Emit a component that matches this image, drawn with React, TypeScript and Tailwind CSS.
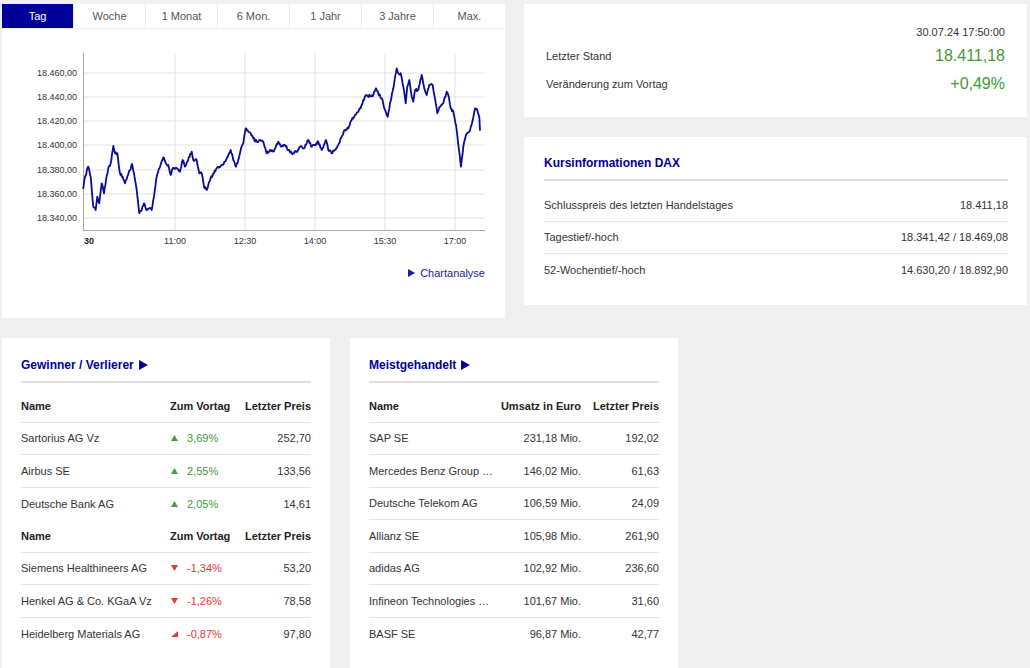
import React from "react";

const pts: [number, number][] = [
  [83.3, 188.3], [85, 176.7], [88.3, 166.7], [90.7, 176.7], [93.3, 206.7], [95.7, 210], [97.3, 196.7],
  [99.3, 203.3], [101.7, 183.3], [104, 193.3], [106, 180], [108.3, 168.3], [110.7, 163.3], [113.3, 146],
  [115, 153.3], [117.3, 153.3], [120, 173.3], [122.7, 176.7], [125, 183.3], [127.3, 176.7], [130, 170],
  [132, 164], [134, 173.3], [136.7, 190], [139.3, 213.3], [141.7, 210], [144, 203.3], [146.7, 210],
  [149.3, 208.3], [151.7, 210], [154, 196.7], [156.7, 176.7], [159.3, 168.3], [163.3, 157.3], [166, 163.3],
  [168.3, 165], [170.7, 175], [172.7, 168.3], [176.7, 168.3], [180, 171.7], [182.7, 160], [185, 166.7],
  [187.3, 161.7], [191.7, 151.7], [193.3, 160], [196.7, 160], [199.3, 173.3], [201.7, 173.3], [204, 186.7],
  [206.7, 190], [209.3, 181.7], [213.3, 173.3], [216.7, 168.3], [221.7, 165], [225, 161.7], [228.3, 155],
  [230.7, 150], [233.3, 160], [236, 166.7], [238.3, 160], [240.7, 150], [243.3, 143.3], [245.7, 128.3],
  [248.3, 131.7], [250.7, 133.3], [253.3, 138.3], [256.7, 141.7], [260, 140], [263.3, 141.7], [266.7, 153.3],
  [270, 150], [273.3, 151.7], [278.3, 141.7], [281.7, 146.7], [285, 145], [288.3, 150], [291.7, 153.3],
  [296.7, 151.7], [300, 146.7], [304, 148.3], [308.3, 140], [311.7, 146.7], [315, 145], [318.3, 141.7],
  [321.7, 150], [326, 140], [328.3, 150], [331.7, 153.3], [335, 150], [338.3, 145], [341.7, 136.7],
  [345, 130], [348.3, 128.3], [351.7, 120], [355, 115], [358.3, 111.7], [360.7, 108.3], [363.3, 100],
  [366, 95], [370, 96], [373.3, 95], [376, 88.3], [378.3, 93.3], [381.7, 98.3], [385, 110], [387.7, 116.7],
  [390, 103.3], [393.3, 88.3], [396.7, 68.3], [398.3, 73.3], [400.7, 73.3], [403.3, 86.7], [405.7, 103.3],
  [407.3, 86.7], [409.3, 80], [411.7, 96.7], [413.3, 101.7], [415, 90], [418.3, 90], [421.7, 75],
  [424, 86.7], [426.7, 95], [429.3, 85], [432.7, 85], [435, 98.3], [437.3, 113.3], [440, 106.7],
  [443.3, 103.3], [446.7, 91.7], [448.3, 95], [450.7, 108.3], [453.3, 111.7], [456.7, 130], [459, 150],
  [461, 166.7], [463.3, 146.7], [466, 135], [469.3, 131.7], [472.7, 120], [475, 108.3], [477.3, 110],
  [479.3, 116.7], [480, 130],
];

function buildPath(): string {
  let seed = 12345;
  const rnd = () => {
    seed = (seed * 16807) % 2147483647;
    return seed / 2147483647;
  };
  const out: string[] = [];
  for (let i = 0; i < pts.length - 1; i++) {
    const [x0, y0] = pts[i];
    const [x1, y1] = pts[i + 1];
    const steps = Math.max(1, Math.round((x1 - x0) / 0.7));
    for (let s = 0; s < steps; s++) {
      const t = s / steps;
      const x = x0 + (x1 - x0) * t;
      let y = y0 + (y1 - y0) * t;
      if (s > 0) y += (rnd() - 0.5) * 2.6;
      out.push(`${x.toFixed(2)},${y.toFixed(2)}`);
    }
  }
  const last = pts[pts.length - 1];
  out.push(`${last[0]},${last[1]}`);
  return "M" + out.join("L");
}

const linePath = buildPath();

const yLabels: [string, number][] = [
  ["18.460,00", 73],
  ["18.440,00", 97],
  ["18.420,00", 121],
  ["18.400,00", 145],
  ["18.380,00", 170],
  ["18.360,00", 194],
  ["18.340,00", 218],
];

const xLabels: [string, number][] = [
  ["11:00", 175],
  ["12:30", 245],
  ["14:00", 315],
  ["15:30", 385],
  ["17:00", 455],
];

function Chart() {
  return (
    <svg width={503} height={232} viewBox="2 29 503 232" className="block">
      {yLabels.map(([l, y]) => (
        <line key={"h" + l} x1={83} x2={485} y1={y} y2={y} stroke="#e2e2e2" strokeWidth={1} />
      ))}
      {xLabels.map(([l, x]) => (
        <line key={"v" + l} x1={x} x2={x} y1={53} y2={231} stroke="#e2e2e2" strokeWidth={1} />
      ))}
      <line x1={83.5} x2={83.5} y1={53} y2={231} stroke="#a8a8a8" strokeWidth={1} />
      <line x1={83} x2={485} y1={230.5} y2={230.5} stroke="#a8a8a8" strokeWidth={1} />
      {yLabels.map(([l, y]) => (
        <text key={"t" + l} x={77} y={y + 3.2} textAnchor="end" fontSize={9} fill="#333">
          {l}
        </text>
      ))}
      <text x={84} y={244} fontSize={9} fontWeight="bold" fill="#222">
        30
      </text>
      {xLabels.map(([l, x]) => (
        <text key={"x" + l} x={x} y={244} textAnchor="middle" fontSize={9} fill="#333">
          {l}
        </text>
      ))}
      <path d={linePath} fill="none" stroke="#0b0b96" strokeWidth={1.8} strokeLinejoin="round" strokeLinecap="round" />
    </svg>
  );
}

const tabs = ["Tag", "Woche", "1 Monat", "6 Mon.", "1 Jahr", "3 Jahre", "Max."];

function Play({ size = 8, color = "#00009a", className = "" }: { size?: number; color?: string; className?: string }) {
  return (
    <svg width={size} height={size + 1} viewBox="0 0 8 9" className={"inline-block shrink-0 " + className}>
      <polygon points="0,0 8,4.5 0,9" fill={color} />
    </svg>
  );
}

function UpTri() {
  return (
    <svg width={7} height={6} viewBox="0 0 7 6" className="mr-[9px] ml-[1px] shrink-0">
      <polygon points="3.5,0 7,6 0,6" fill="#43a047" />
    </svg>
  );
}
function DownTri() {
  return (
    <svg width={7} height={6} viewBox="0 0 7 6" className="mr-[9px] ml-[1px] shrink-0">
      <polygon points="0,0 7,0 3.5,6" fill="#e53935" />
    </svg>
  );
}
function CornerTri() {
  return (
    <svg width={7} height={6} viewBox="0 0 7 6" className="mr-[9px] ml-[1px] shrink-0">
      <polygon points="7,0 7,6 0,6" fill="#e53935" />
    </svg>
  );
}

type GV = { name: string; val: string; price: string; dir: "up" | "down" | "corner" };

const gainers: GV[] = [
  { name: "Sartorius AG Vz", val: "3,69%", price: "252,70", dir: "up" },
  { name: "Airbus SE", val: "2,55%", price: "133,56", dir: "up" },
  { name: "Deutsche Bank AG", val: "2,05%", price: "14,61", dir: "up" },
];
const losers: GV[] = [
  { name: "Siemens Healthineers AG", val: "-1,34%", price: "53,20", dir: "down" },
  { name: "Henkel AG & Co. KGaA Vz", val: "-1,26%", price: "78,58", dir: "down" },
  { name: "Heidelberg Materials AG", val: "-0,87%", price: "97,80", dir: "corner" },
];

const most: [string, string, string][] = [
  ["SAP SE", "231,18 Mio.", "192,02"],
  ["Mercedes Benz Group …", "146,02 Mio.", "61,63"],
  ["Deutsche Telekom AG", "106,59 Mio.", "24,09"],
  ["Allianz SE", "105,98 Mio.", "261,90"],
  ["adidas AG", "102,92 Mio.", "236,60"],
  ["Infineon Technologies …", "101,67 Mio.", "31,60"],
  ["BASF SE", "96,87 Mio.", "42,77"],
];

function GVHeader({ border }: { border: boolean }) {
  return (
    <div
      className={
        "grid grid-cols-[149px_70px_1fr] items-center h-[32.5px] text-[11px] font-bold text-[#222] " +
        (border ? "border-b border-[#e3e3e3]" : "")
      }
    >
      <div>Name</div>
      <div>Zum Vortag</div>
      <div className="text-right">Letzter Preis</div>
    </div>
  );
}

function GVRow({ r, border }: { r: GV; border: boolean }) {
  const up = r.dir === "up";
  return (
    <div
      className={
        "grid grid-cols-[149px_70px_1fr] items-center h-[32.5px] text-[11px] text-[#333] " +
        (border ? "border-b border-[#e3e3e3]" : "")
      }
    >
      <div className="whitespace-nowrap">{r.name}</div>
      <div className={"flex items-center " + (up ? "text-[#3f9a36]" : "text-[#e53935]")}>
        {r.dir === "up" ? <UpTri /> : r.dir === "down" ? <DownTri /> : <CornerTri />}
        <span>{r.val}</span>
      </div>
      <div className="text-right">{r.price}</div>
    </div>
  );
}

function PanelTitle({ children, arrow }: { children: React.ReactNode; arrow?: boolean }) {
  return (
    <div className="flex items-center text-[12px] leading-[16px] font-bold text-[#00009a] pb-[8px] border-b-2 border-[#dedede]">
      <span>{children}</span>
      {arrow && <Play size={9} className="ml-[5px]" />}
    </div>
  );
}

export default function App() {
  return (
    <div className="min-h-[668px] bg-[#f0f0f0] font-['Liberation_Sans',Arial,sans-serif] pl-[2px] pt-[4px] overflow-hidden">
      <div className="flex gap-[19px] items-start">
        {/* Chart panel */}
        <div className="w-[503px] flex flex-col gap-px bg-[#ececec]">
          <div className="flex gap-px h-[24px]">
            {tabs.map((t, i) => (
              <div
                key={t}
                className={
                  "flex-1 flex items-center justify-center text-[11px] " +
                  (i === 0 ? "bg-[#00009a] text-white" : "bg-white text-[#555]")
                }
              >
                {t}
              </div>
            ))}
          </div>
          <div className="bg-white h-[289px] flex flex-col">
            <Chart />
            <div className="flex justify-end items-center pr-[20px] pt-[5px] text-[11px] leading-[14px] text-[#1a1aa6]">
              <Play size={7} color="#1a1aa6" className="mr-[5px]" />
              <span>Chartanalyse</span>
            </div>
          </div>
        </div>

        {/* Right column */}
        <div className="w-[503px] flex flex-col gap-[20px]">
          <div className="bg-white h-[113px] pl-[22px] pr-[22px] pt-[21px] text-[11px] text-[#333]">
            <div className="text-right leading-[14px]">30.07.24 17:50:00</div>
            <div className="flex justify-between items-center mt-[7px] h-[20px]">
              <span>Letzter Stand</span>
              <span className="text-[16px] text-[#3f9a36]">18.411,18</span>
            </div>
            <div className="flex justify-between items-center mt-[8px] h-[20px]">
              <span>Veränderung zum Vortag</span>
              <span className="text-[16px] text-[#3f9a36]">+0,49%</span>
            </div>
          </div>
          <div className="bg-white h-[168px] pl-[20px] pr-[19px] pt-[18px]">
            <PanelTitle>Kursinformationen DAX</PanelTitle>
            <div className="mt-[8px] text-[11px] text-[#333]">
              <div className="flex justify-between items-center h-[32.5px] border-b border-[#e3e3e3]">
                <span>Schlusspreis des letzten Handelstages</span>
                <span>18.411,18</span>
              </div>
              <div className="flex justify-between items-center h-[32.5px] border-b border-[#e3e3e3]">
                <span>Tagestief/-hoch</span>
                <span>18.341,42 / 18.469,08</span>
              </div>
              <div className="flex justify-between items-center h-[32.5px]">
                <span>52-Wochentief/-hoch</span>
                <span>14.630,20 / 18.892,90</span>
              </div>
            </div>
          </div>
        </div>
      </div>

      {/* Bottom row */}
      <div className="flex gap-[20px] mt-[20px] items-start">
        <div className="w-[328px] bg-white px-[19px] pt-[19px] pb-[24px]">
          <PanelTitle arrow>Gewinner / Verlierer</PanelTitle>
          <div className="mt-[7px]">
            <GVHeader border />
            {gainers.map((r, i) => (
              <GVRow key={r.name} r={r} border={i < gainers.length - 1} />
            ))}
            <GVHeader border />
            {losers.map((r, i) => (
              <GVRow key={r.name} r={r} border={i < losers.length - 1} />
            ))}
          </div>
        </div>

        <div className="w-[328px] bg-white px-[19px] pt-[19px] pb-[24px]">
          <PanelTitle arrow>Meistgehandelt</PanelTitle>
          <div className="mt-[7px] text-[11px]">
            <div className="grid grid-cols-[124px_88px_1fr] items-center h-[32.5px] font-bold text-[#222] border-b border-[#e3e3e3]">
              <div>Name</div>
              <div className="text-right whitespace-nowrap">Umsatz in Euro</div>
              <div className="text-right">Letzter Preis</div>
            </div>
            {most.map((r, i) => (
              <div
                key={r[0]}
                className={
                  "grid grid-cols-[124px_88px_1fr] items-center h-[32.5px] text-[#333] " +
                  (i < most.length - 1 ? "border-b border-[#e3e3e3]" : "")
                }
              >
                <div className="whitespace-nowrap">{r[0]}</div>
                <div className="text-right">{r[1]}</div>
                <div className="text-right">{r[2]}</div>
              </div>
            ))}
          </div>
        </div>
      </div>
    </div>
  );
}
